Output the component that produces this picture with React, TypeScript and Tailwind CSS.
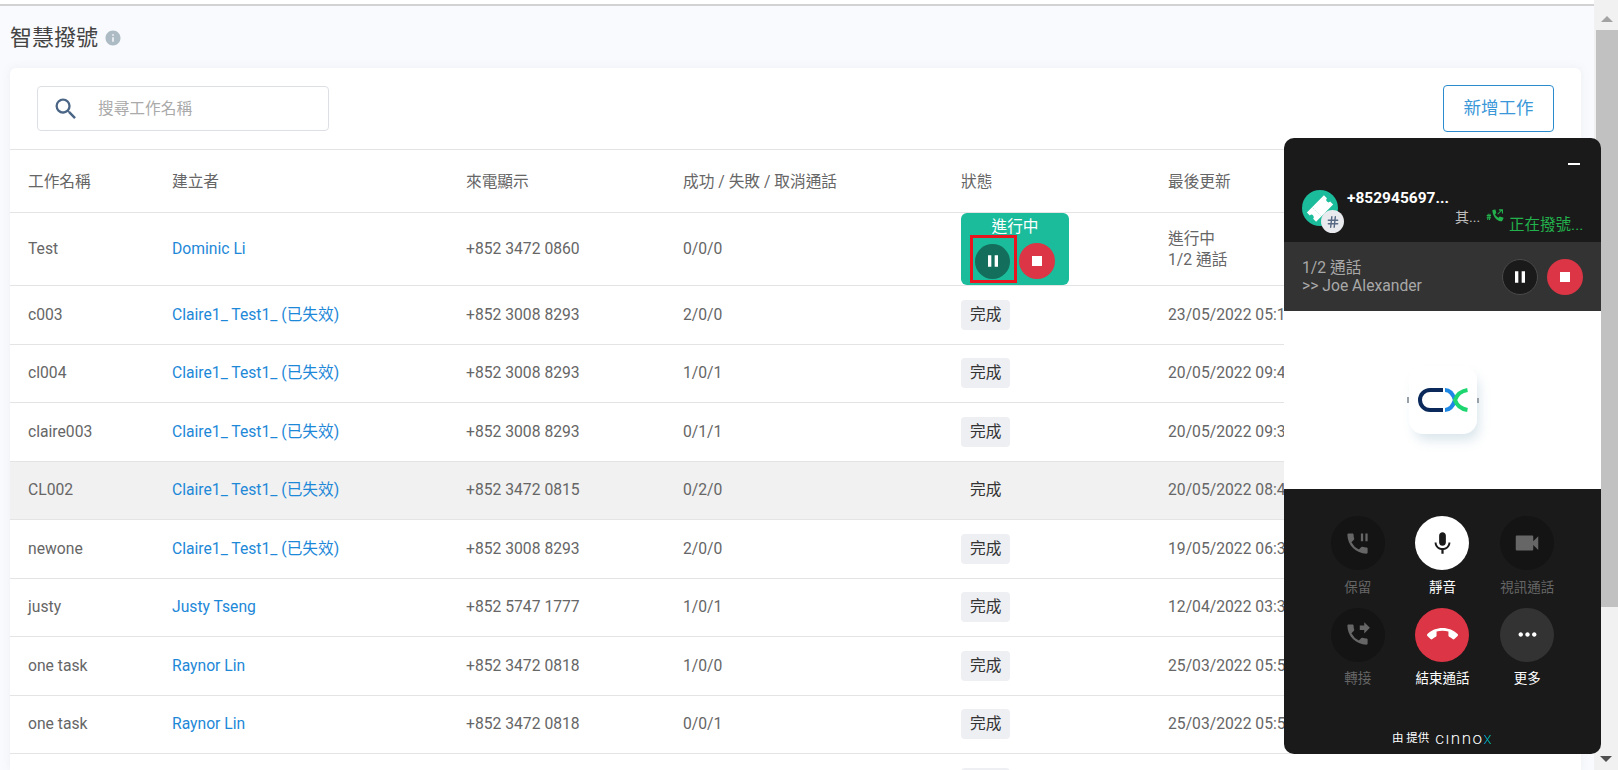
import React from 'react';
import { Hash } from 'lucide-react';
import {
  MdCallEnd,
  MdInfo,
  MdMic,
  MdMoreHoriz,
  MdPause,
  MdPhoneForwarded,
  MdPhonePaused,
  MdSearch,
  MdStop,
  MdVideocam,
} from 'react-icons/md';

type Task = { name: string; owner: string; phone: string; counts: string; updated: string; hover?: boolean };

const tasks: Task[] = [
  { name: 'c003', owner: 'Claire1_ Test1_ (已失效)', phone: '+852 3008 8293', counts: '2/0/0', updated: '23/05/2022 05:12' },
  { name: 'cl004', owner: 'Claire1_ Test1_ (已失效)', phone: '+852 3008 8293', counts: '1/0/1', updated: '20/05/2022 09:45' },
  { name: 'claire003', owner: 'Claire1_ Test1_ (已失效)', phone: '+852 3008 8293', counts: '0/1/1', updated: '20/05/2022 09:31' },
  { name: 'CL002', owner: 'Claire1_ Test1_ (已失效)', phone: '+852 3472 0815', counts: '0/2/0', updated: '20/05/2022 08:42', hover: true },
  { name: 'newone', owner: 'Claire1_ Test1_ (已失效)', phone: '+852 3008 8293', counts: '2/0/0', updated: '19/05/2022 06:33' },
  { name: 'justy', owner: 'Justy Tseng', phone: '+852 5747 1777', counts: '1/0/1', updated: '12/04/2022 03:36' },
  { name: 'one task', owner: 'Raynor Lin', phone: '+852 3472 0818', counts: '1/0/0', updated: '25/03/2022 05:51' },
  { name: 'one task', owner: 'Raynor Lin', phone: '+852 3472 0818', counts: '0/0/1', updated: '25/03/2022 05:50' },
];

const columns = 'grid grid-cols-[144px_294px_217px_278px_1fr] items-center pl-[18px]';

function CxMark({ className }: { className?: string }) {
  return (
    <svg viewBox="0 0 50 24" fill="none" strokeWidth="4" className={className}>
      <path d="M25 2H12a10 10 0 0 0 0 20h13" stroke="#0b2a5b" />
      <path d="M27 2c5 0 8 4 10 10-2 6-5 10-10 10" stroke="#1e88e5" />
      <path d="M49.500 2c-6 1-10.500 4-12.500 10 2 6 6.500 9 12.500 10" stroke="#1ed66f" />
    </svg>
  );
}

function Control({ label, dim, tone, icon }: { label: string; dim?: boolean; tone: string; icon: React.ReactNode }) {
  return (
    <div className="flex flex-col items-center">
      <div className={'flex size-[54px] items-center justify-center rounded-full ' + tone}>{icon}</div>
      <span className={'mt-[7.5px] text-[13.5px] leading-[18px] ' + (dim ? 'text-[#666666]' : 'text-white')}>{label}</span>
    </div>
  );
}

function Widget() {
  return (
    <div className="absolute left-[1284px] top-[138px] z-20 flex h-[616px] w-[317px] flex-col overflow-hidden rounded-[10px] bg-[#1a1a1a]">
      <div className="relative h-[104px] shrink-0">
        <div className="absolute right-[21px] top-[25px] h-[2px] w-[12px] bg-white" />
        <div className="absolute left-[18px] top-[52px] flex size-[36px] items-center justify-center rounded-full bg-[#1abc9c]">
          <svg viewBox="0 0 28 16" className="h-[15px] w-[26px] -rotate-45">
            <path d="M1 1h26v4.500a2.500 2.500 0 0 0 0 5V15H1v-4.500a2.500 2.500 0 0 0 0-5z" fill="#ffffff" />
            <path d="M9 2v12" stroke="#bfeee3" strokeWidth="1" strokeDasharray="2 1.500" />
          </svg>
          <div className="absolute left-[19px] top-[20px] flex size-[23px] items-center justify-center rounded-full bg-[#e8eaee]">
            <Hash className="size-[14px] text-[#5a6b85]" strokeWidth={2.5} />
          </div>
        </div>
        <div className="absolute left-[63px] top-[50px] text-[15.5px] font-bold leading-[20px] text-white">+852945697...</div>
        <div className="absolute left-[171px] top-[69px] flex items-start">
          <span className="text-[14px] leading-[20px] text-[#bdbdbd]">其...</span>
          <svg viewBox="0 0 20 16" className="ml-[6px] mt-[2px] h-[14px] w-[18px]" fill="#22b14c">
            <path d="M7 1c0 7 5 13 11 13l2-4-4.500-1.500-1.500 1.500c-2-1-3-2-4-4l1.500-1.500-1-4z" />
            <path d="M0.500 7.500h5M0.500 10h5M2.300 5.500l-.6 7M4.300 5.500l-.6 7" stroke="#22b14c" strokeWidth="1.200" />
            <path d="M13 6l5-5M14.500 1H18.500V5" stroke="#22b14c" strokeWidth="1.200" fill="none" />
          </svg>
          <span className="ml-[5px] mt-[8px] text-[15.5px] leading-[20px] text-[#22b14c]">正在撥號...</span>
        </div>
      </div>

      <div className="flex h-[69px] shrink-0 items-center justify-between bg-[#333333] pl-[18px] pr-[18px]">
        <div className="text-[15.7px] leading-[18px] text-[#a8a8a8]">
          <div>1/2 通話</div>
          <div>&gt;&gt; Joe Alexander</div>
        </div>
        <div className="flex items-center gap-[9px]">
          <div className="flex size-[36px] items-center justify-center rounded-full border border-[#4a4a4a] bg-[#1a1a1a]">
            <MdPause className="size-[20px] text-white" />
          </div>
          <div className="flex size-[36px] items-center justify-center rounded-full bg-[#dc3545]">
            <MdStop className="size-[20px] text-white" />
          </div>
        </div>
      </div>

      <div className="flex h-[178px] shrink-0 items-center justify-center bg-white">
        <div className="relative flex size-[68px] items-center justify-center rounded-[14px] bg-white shadow-[4px_8px_12px_-2px_rgba(130,170,190,0.3)]">
          <CxMark className="h-[24px] w-[50px]" />
          <div className="absolute -left-[2px] top-[31px] h-[6px] w-[2px] bg-[#9aa0a8]" />
          <div className="absolute -right-[2px] top-[32px] h-[5px] w-[2px] bg-[#9aa0a8]" />
        </div>
      </div>

      <div className="flex flex-1 flex-col items-center pt-[27px]">
        <div className="grid w-[254px] grid-cols-3 gap-y-[12px]">
          <Control label="保留" dim tone="bg-[#141414]" icon={<MdPhonePaused className="size-[27px] text-[#666666]" />} />
          <Control label="靜音" tone="bg-white" icon={<MdMic className="size-[27px] text-[#1a1a1a]" />} />
          <Control label="視訊通話" dim tone="bg-[#141414]" icon={<MdVideocam className="size-[30px] text-[#666666]" />} />
          <Control label="轉接" dim tone="bg-[#141414]" icon={<MdPhoneForwarded className="size-[27px] text-[#666666]" />} />
          <Control label="結束通話" tone="bg-[#dc3545]" icon={<MdCallEnd className="size-[31px] text-white" />} />
          <Control label="更多" tone="bg-[#333333]" icon={<MdMoreHoriz className="size-[27px] text-white" />} />
        </div>
        <div className="mt-[43px] flex items-center text-[11.5px] leading-[16px] text-white">
          <span>由 提供</span>
          <span className="ml-[6px] text-[17px] font-light tracking-[1.500px]">
            cınno
            <span className="bg-gradient-to-r from-[#1e88e5] to-[#1ed66f] bg-clip-text text-transparent">x</span>
          </span>
        </div>
      </div>
    </div>
  );
}

export default function App() {
  return (
    <div className="relative flex h-[770px] w-[1618px] overflow-hidden bg-white font-[Roboto,'Noto_Sans_CJK_TC',sans-serif] text-[15.7px] text-[#666666]">
      <div className="flex w-[1594px] flex-col">
        <div className="h-[6px] shrink-0 border-b-2 border-[#d2d2d2] bg-white" />
        <div className="flex min-h-0 flex-1 flex-col bg-[#f9fafd] pl-[10px] pr-[13px]">
          <div className="flex h-[62px] shrink-0 items-center gap-[6px] pt-[1px]">
            <h1 className="text-[22px] font-normal text-[#444444]">智慧撥號</h1>
            <MdInfo className="size-[18px] text-[#adbcc4]" />
          </div>
          <div className="min-h-0 flex-1 overflow-hidden rounded-t-[6px] bg-white shadow-[0_0_10px_rgba(120,140,170,0.1)]">
            <div className="flex h-[81px] items-start justify-between pl-[27px] pr-[27px] pt-[17px]">
              <div className="mt-px flex h-[45px] w-[292px] items-center rounded-[4px] border border-[#dcdfe4]">
                <MdSearch className="ml-[14px] size-[28px] text-[#4a6585]" />
                <span className="ml-[18px] text-[15.7px] text-[#aaaaaa]">搜尋工作名稱</span>
              </div>
              <button className="h-[47px] w-[111px] rounded-[4px] border border-[#2a8ccc] bg-white text-[17.5px] text-[#3a97d8]">新增工作</button>
            </div>
            <div className={columns + ' h-[64px] border-y border-[#e4e4e4] pt-[1px]'}>
              <span>工作名稱</span>
              <span>建立者</span>
              <span>來電顯示</span>
              <span>成功 / 失敗 / 取消通話</span>
              <div className="grid grid-cols-[207px_1fr]">
                <span>狀態</span>
                <span>最後更新</span>
              </div>
            </div>
            <div className={columns + ' h-[73px] border-b border-[#e4e4e4]'}>
              <span>Test</span>
              <span className="text-[#1e88d8]">Dominic Li</span>
              <span>+852 3472 0860</span>
              <span>0/0/0</span>
              <div className="grid grid-cols-[207px_1fr] items-center">
                <div className="flex h-[72px] w-[108px] flex-col items-center rounded-[6px] bg-[#1abc9c] pt-[3px] text-white">
                  <span className="leading-[22px]">進行中</span>
                  <div className="relative mt-[5px] flex w-full items-center pl-[14px]">
                    <div className="flex size-[35px] items-center justify-center rounded-full bg-[#136e5b]">
                      <MdPause className="size-[20px]" />
                    </div>
                    <div className="ml-[9px] flex size-[36px] items-center justify-center rounded-full bg-[#dc3545]">
                      <MdStop className="size-[20px]" />
                    </div>
                    <div className="absolute left-[9px] top-[-8px] h-[48px] w-[47px] border-[3px] border-[#e8141e]" />
                  </div>
                </div>
                <div className="leading-[21px]">
                  <div>進行中</div>
                  <div>1/2 通話</div>
                </div>
              </div>
            </div>
            {tasks.map((task, index) => (
              <div
                key={'Task_Row__' + String(index)}
                className={columns + ' h-[58.5px] border-b border-[#e4e4e4] ' + (task.hover ? 'bg-[#f1f1f1]' : '')}
              >
                <span>{task.name}</span>
                <span className="text-[#1e88d8]">{task.owner}</span>
                <span>{task.phone}</span>
                <span>{task.counts}</span>
                <div className="grid grid-cols-[207px_1fr] items-center">
                  <span className={'w-fit rounded-[4px] px-[9px] py-[3px] text-[#333333] ' + (task.hover ? '' : 'bg-[#eeeff3]')}>完成</span>
                  <span className="whitespace-nowrap">{task.updated}</span>
                </div>
              </div>
            ))}
            {/* next row only peeks in at the window's bottom edge */}
            <div className="relative h-[20px]">
              <div className="absolute left-[951px] top-[14px] h-[32px] w-[49px] rounded-[4px] bg-[#eeeff3]" />
              <div className="absolute left-[1491px] top-[16px] h-[2px] w-[7px] bg-[#8a95a5]" />
            </div>
          </div>
        </div>
      </div>
      <div className="flex w-[24px] flex-col bg-[#f1f1f1] pt-[7px]">
        <div className="flex h-[23px] shrink-0 items-center justify-center pl-[1px]">
          <div className="size-0 border-x-[6px] border-b-[6px] border-x-transparent border-b-[#a3a3a3]" />
        </div>
        <div className="ml-[2px] h-[577px] w-[22px] shrink-0 bg-[#c1c1c1]" />
        <div className="flex-1" />
        <div className="flex h-[23px] shrink-0 items-center justify-center">
          <div className="size-0 border-x-[6px] border-t-[6px] border-x-transparent border-t-[#505050]" />
        </div>
      </div>
      <Widget />
    </div>
  );
}
